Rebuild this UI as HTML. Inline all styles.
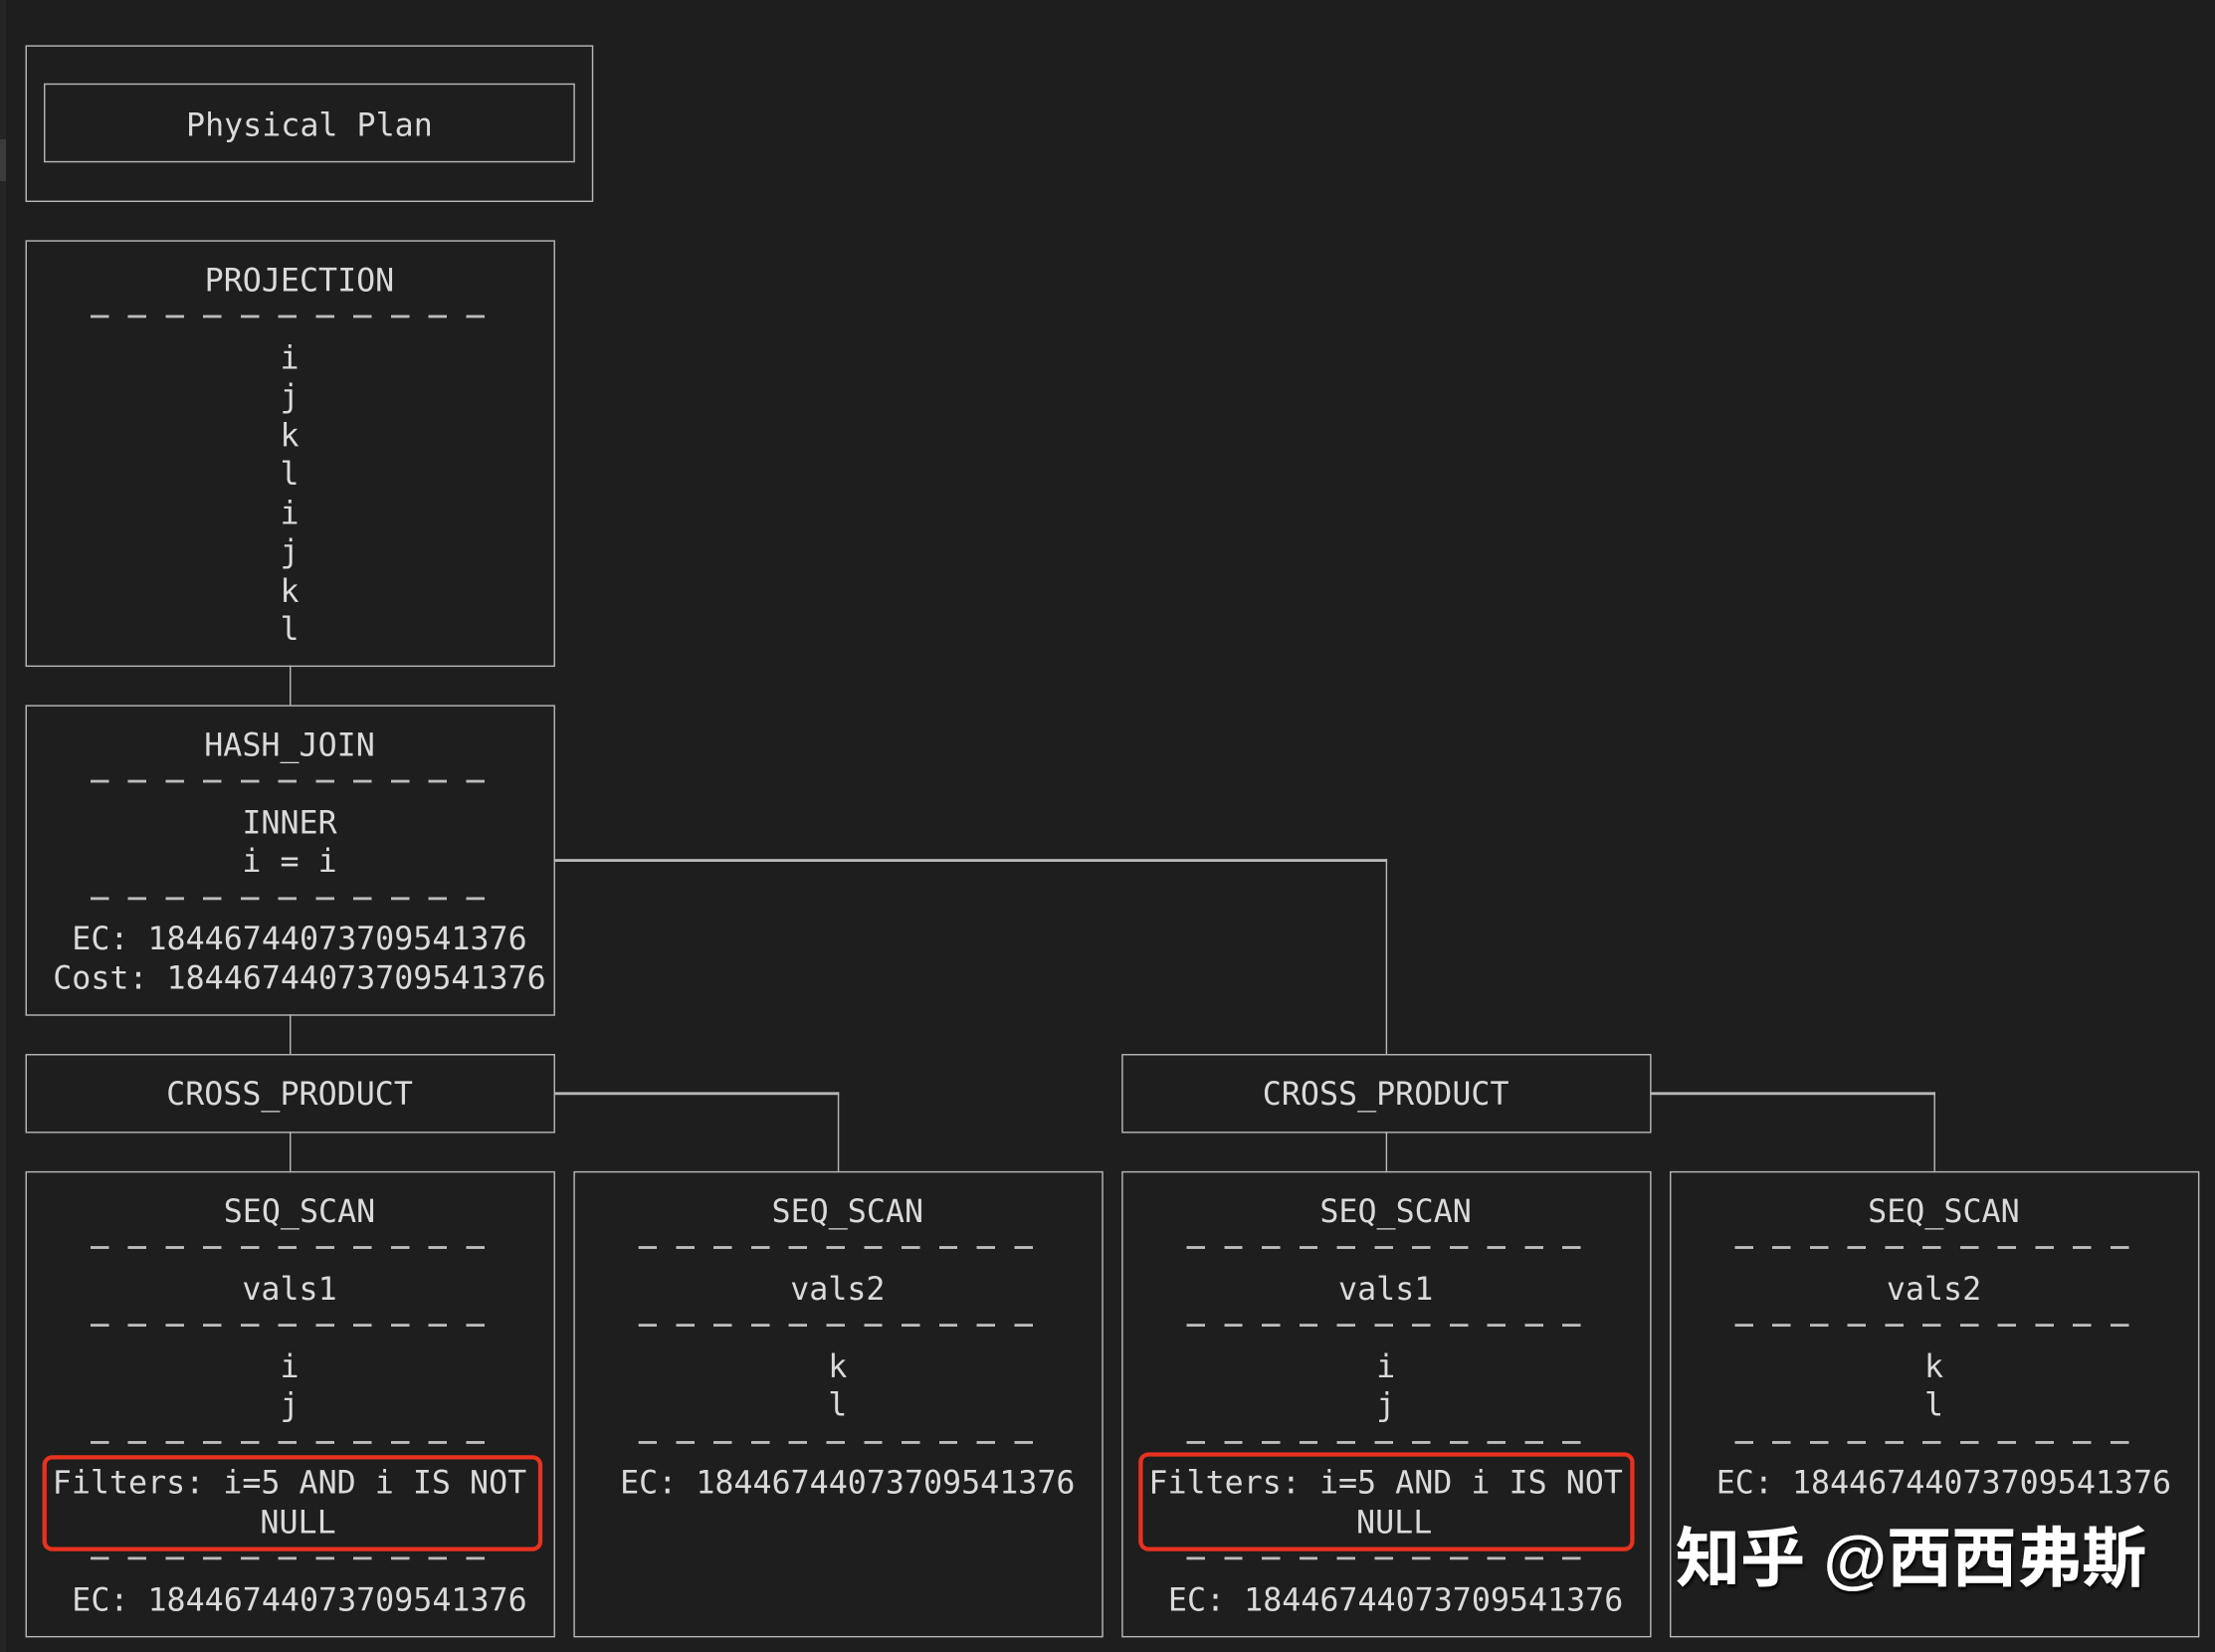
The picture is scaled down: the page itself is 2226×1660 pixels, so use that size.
<!DOCTYPE html>
<html><head><meta charset="utf-8">
<style>
html,body{margin:0;padding:0;background:#1e1e1e;}
body{width:2226px;height:1660px;overflow:hidden;position:relative;}
#s{position:absolute;left:0;top:0;width:1568px;height:1169px;transform:scale(1.41964);transform-origin:0 0;}
.b{position:absolute;border:1.6px solid #b8b8b8;box-sizing:border-box;}
.h{position:absolute;height:1.6px;background:#b8b8b8;}
.v{position:absolute;width:1.6px;background:#b8b8b8;}
.t{position:absolute;width:400px;height:28px;line-height:28px;text-align:center;font-family:"DejaVu Sans Mono","Liberation Mono",monospace;font-size:22.3px;color:#dadada;white-space:pre;margin-top:2px;}
.d{position:absolute;width:283px;height:1.6px;background:repeating-linear-gradient(90deg,#bdbdbd 0 13px,transparent 13px 26.6px);}
.r{position:absolute;border:3px solid #e8321e;border-radius:7px;box-sizing:border-box;}
</style></head><body>
<div style="position:absolute;left:0;top:0;width:6px;height:1660px;background:#252526"></div>
<div style="position:absolute;left:0;top:140px;width:6px;height:42px;background:#3a3b3d"></div>
<div id="s">
<div class="b" style="left:18px;top:32px;width:402px;height:111px"></div>
<div class="b" style="left:31px;top:59px;width:376px;height:56px"></div>
<div class="t" style="left:19px;top:73px">Physical Plan</div>

<div class="b" style="left:18px;top:170px;width:375px;height:302px"></div>
<div class="t" style="left:12px;top:183px">PROJECTION</div>
<div class="d" style="left:64px;top:223px"></div>
<div class="t" style="left:5px;top:238px">i</div>
<div class="t" style="left:5px;top:265px">j</div>
<div class="t" style="left:5px;top:293px">k</div>
<div class="t" style="left:5px;top:320px">l</div>
<div class="t" style="left:5px;top:348px">i</div>
<div class="t" style="left:5px;top:375px">j</div>
<div class="t" style="left:5px;top:403px">k</div>
<div class="t" style="left:5px;top:430px">l</div>
<div class="v" style="left:204.5px;top:471px;height:28px"></div>

<div class="b" style="left:18px;top:499px;width:375px;height:220px"></div>
<div class="t" style="left:5px;top:512px">HASH_JOIN</div>
<div class="d" style="left:64px;top:552px"></div>
<div class="t" style="left:5px;top:567px">INNER</div>
<div class="t" style="left:5px;top:594px">i = i</div>
<div class="d" style="left:64px;top:635px"></div>
<div class="t" style="left:12px;top:649px">EC: 18446744073709541376</div>
<div class="t" style="left:12px;top:677px">Cost: 18446744073709541376</div>
<div class="h" style="left:392px;top:608px;width:590px"></div>
<div class="v" style="left:980.5px;top:608px;height:138px"></div>
<div class="v" style="left:204.5px;top:718px;height:28px"></div>

<div class="b" style="left:18px;top:746px;width:375px;height:56px"></div>
<div class="t" style="left:5px;top:759px">CROSS_PRODUCT</div>
<div class="h" style="left:392px;top:773px;width:202px"></div>
<div class="v" style="left:592.5px;top:773px;height:56px"></div>
<div class="v" style="left:204.5px;top:801px;height:28px"></div>

<div class="b" style="left:794px;top:746px;width:375px;height:56px"></div>
<div class="t" style="left:781px;top:759px">CROSS_PRODUCT</div>
<div class="h" style="left:1168px;top:773px;width:202px"></div>
<div class="v" style="left:1368.5px;top:773px;height:56px"></div>
<div class="v" style="left:980.5px;top:801px;height:28px"></div>

<div class="b" style="left:18px;top:829px;width:375px;height:330px"></div>
<div class="t" style="left:12px;top:842px">SEQ_SCAN</div>
<div class="d" style="left:64px;top:882px"></div>
<div class="t" style="left:5px;top:897px">vals1</div>
<div class="d" style="left:64px;top:937px"></div>
<div class="t" style="left:5px;top:952px">i</div>
<div class="t" style="left:5px;top:979px">j</div>
<div class="d" style="left:64px;top:1020px"></div>
<div class="t" style="left:5px;top:1034px">Filters: i=5 AND i IS NOT</div>
<div class="t" style="left:11px;top:1062px">NULL</div>
<div class="r" style="left:30px;top:1030px;width:354px;height:68px"></div>
<div class="d" style="left:64px;top:1102px"></div>
<div class="t" style="left:12px;top:1117px">EC: 18446744073709541376</div>

<div class="b" style="left:406px;top:829px;width:375px;height:330px"></div>
<div class="t" style="left:400px;top:842px">SEQ_SCAN</div>
<div class="d" style="left:452px;top:882px"></div>
<div class="t" style="left:393px;top:897px">vals2</div>
<div class="d" style="left:452px;top:937px"></div>
<div class="t" style="left:393px;top:952px">k</div>
<div class="t" style="left:393px;top:979px">l</div>
<div class="d" style="left:452px;top:1020px"></div>
<div class="t" style="left:400px;top:1034px">EC: 18446744073709541376</div>

<div class="b" style="left:794px;top:829px;width:375px;height:330px"></div>
<div class="t" style="left:788px;top:842px">SEQ_SCAN</div>
<div class="d" style="left:840px;top:882px"></div>
<div class="t" style="left:781px;top:897px">vals1</div>
<div class="d" style="left:840px;top:937px"></div>
<div class="t" style="left:781px;top:952px">i</div>
<div class="t" style="left:781px;top:979px">j</div>
<div class="d" style="left:840px;top:1020px"></div>
<div class="t" style="left:781px;top:1034px">Filters: i=5 AND i IS NOT</div>
<div class="t" style="left:787px;top:1062px">NULL</div>
<div class="r" style="left:806px;top:1028px;width:351px;height:70px"></div>
<div class="d" style="left:840px;top:1102px"></div>
<div class="t" style="left:788px;top:1117px">EC: 18446744073709541376</div>

<div class="b" style="left:1182px;top:829px;width:375px;height:330px"></div>
<div class="t" style="left:1176px;top:842px">SEQ_SCAN</div>
<div class="d" style="left:1228px;top:882px"></div>
<div class="t" style="left:1169px;top:897px">vals2</div>
<div class="d" style="left:1228px;top:937px"></div>
<div class="t" style="left:1169px;top:952px">k</div>
<div class="t" style="left:1169px;top:979px">l</div>
<div class="d" style="left:1228px;top:1020px"></div>
<div class="t" style="left:1176px;top:1034px">EC: 18446744073709541376</div>

<div style="position:absolute;left:1186px;top:1075px;font-family:'Liberation Sans','Noto Sans CJK SC',sans-serif;font-size:46px;line-height:56px;color:#fff;font-weight:bold;white-space:nowrap;text-shadow:1px 2px 2px rgba(0,0,0,0.8);">知乎 @西西弗斯</div>
</div>
</body></html>
